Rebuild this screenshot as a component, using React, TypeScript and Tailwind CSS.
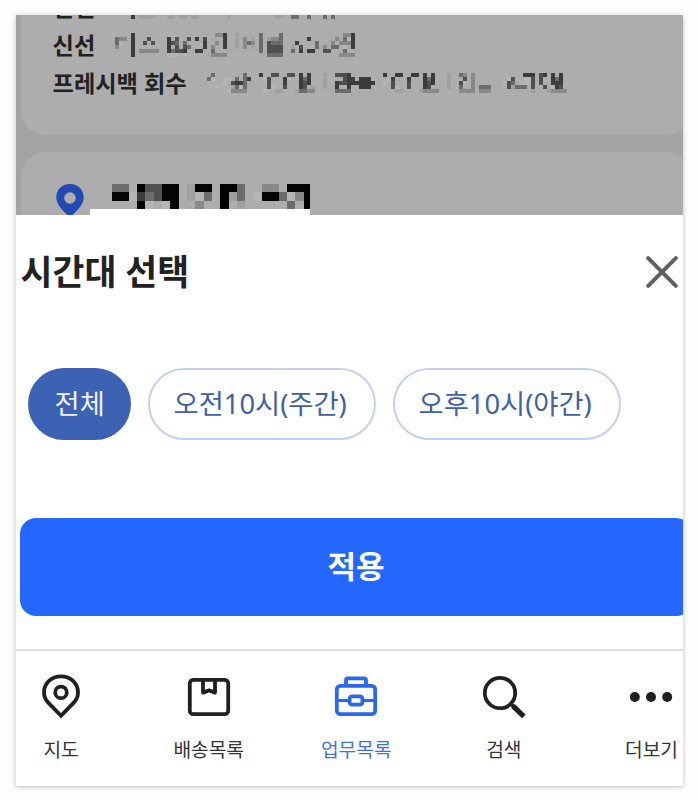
import type { ReactNode } from "react";

const SHADES: Record<string, string> = {
  "+": "#b5b5b5",
  "1": "#a0a0a0",
  "2": "#888888",
  "3": "#6c6c6c",
  "4": "#505050",
  "5": "#3c3c3c",
  "9": "#040404",
};

// Masked values: one character per cell, "." is transparent.
const PREV_MASK = [
  "....5.1111...11.11.11.......1...........11..33..3...3.3.....",
];

const PRICE_MASK = [
  "....5....................225..1.....3....3...............225",
  "322.5...4....5.4..4.5.4....5..1.2.1.3.1223......5......2.3+5",
  "3+..5..4.4...543.3....5..2.5..1.232.3.4333...5....3...2.2225",
  "2...5........5.4.43...5.2..5..1.2.1.3.4444..1.4...3.2.33.+.5",
  "....5.22222..53445..55..3...........3.4444..3.5.55..44...3..",
  "....5........+++.+......2222..........3333..............2222",
];

const BAG_MASK = [
  ".3.......3...5..44..44.5.5...1..4445........5..55..55.5.5...1..32.2............555.45.5.5.",
  "3+..++.3.35...+4...5+..535...1....455.555....+5...5...535...1...4.2........+4..++4.4..535.",
  "....+.4553.....4...5...545...1..5445555555..+.4...4...545...1..4+.2.......+43.+++4.4..555.",
  "..+...13+3.....4+..4...54.1..1..5..5..555.....4+..4...54....1..3..2.333....41333.4..4.+54.",
  ".....+2222....+..11...13322.....3333...........11....12222.....2222.222..........1...12222",
];

const ADDRESS_MASK = [
  "33.94499.199.993..22.999",
  "99+53499.1+3.913.+993+29",
  "...9+.+9..2..9.1.....3.9",
];

function Mosaic({
  rows,
  cell,
  className = "",
}: {
  rows: string[];
  cell: number;
  className?: string;
}) {
  const w = rows[0].length * cell;
  const h = rows.length * cell;
  return (
    <svg
      width={w}
      height={h}
      viewBox={`0 0 ${w} ${h}`}
      shapeRendering="crispEdges"
      className={`shrink-0 ${className}`}
    >
      {rows.flatMap((row, y) =>
        row.split("").map((c, x) =>
          SHADES[c] ? (
            <rect
              key={`${x}-${y}`}
              x={x * cell}
              y={y * cell}
              width={cell}
              height={cell}
              fill={SHADES[c]}
            />
          ) : null,
        ),
      )}
    </svg>
  );
}

function CloseIcon() {
  return (
    <svg width="32" height="32" viewBox="0 0 32 32" fill="none">
      <path
        d="M2.2 2.2l27.6 27.6M29.8 2.2L2.2 29.8"
        stroke="#606060"
        strokeWidth="4"
        strokeLinecap="round"
      />
    </svg>
  );
}

function Chip({
  children,
  active,
  className,
}: {
  children: ReactNode;
  active?: boolean;
  className: string;
}) {
  return (
    <button
      type="button"
      className={[
        "h-[72px] shrink-0 rounded-full border-2 text-[27.3px] leading-none whitespace-nowrap",
        active
          ? "border-[#3c62b4] bg-[#3c62b4] text-[#eef3ff]"
          : "border-[#c3d1f0] bg-white text-[#3f60a6]",
        className,
      ].join(" ")}
    >
      {children}
    </button>
  );
}

function MapIcon() {
  return (
    <svg width="48" height="48" viewBox="0 0 48 48" fill="none" stroke="#202020" strokeWidth="3.8">
      <path d="M24 43.8L11 30.4C8.2 27.2 7 24 7 20.4C7 11.2 14.6 4.4 24 4.4s17 6.8 17 16c0 3.6-1.2 6.8-4 10z" />
      <circle cx="24" cy="20.4" r="5.8" />
    </svg>
  );
}

function BoxIcon() {
  return (
    <svg width="48" height="48" viewBox="0 0 48 48" fill="none" stroke="#202020" strokeWidth="3.8" strokeLinejoin="round">
      <rect x="4.8" y="7.8" width="38.4" height="34.4" rx="3.5" />
      <path d="M18 8v12.6l6-2.2 6 2.2V8" />
    </svg>
  );
}

function BriefcaseIcon() {
  return (
    <svg width="48" height="48" viewBox="0 0 48 48" fill="none" stroke="#2a67ea" strokeWidth="3.8" strokeLinejoin="round">
      <rect x="4.8" y="13.8" width="38.4" height="28.4" rx="3.8" />
      <path d="M14 13.5V8.4a2 2 0 0 1 2-2h16a2 2 0 0 1 2 2v5.1" />
      <path d="M5 28.5h12.5M30.5 28.5H43" strokeWidth="3.2" />
      <rect x="17.6" y="24.3" width="12.8" height="8.4" rx="2.4" />
    </svg>
  );
}

function SearchIcon() {
  return (
    <svg width="48" height="48" viewBox="0 0 48 48" fill="none" stroke="#202020">
      <circle cx="20" cy="21" r="15.2" strokeWidth="3.8" />
      <path d="M33 34l10.8 10.3" strokeWidth="5.2" />
      <path d="M31 32l3 3" strokeWidth="3.6" />
    </svg>
  );
}

function MoreIcon() {
  return (
    <svg width="48" height="48" viewBox="0 0 48 48" fill="#202020">
      <circle cx="7.8" cy="25" r="5" />
      <circle cx="24" cy="25" r="5" />
      <circle cx="40.2" cy="25" r="5" />
    </svg>
  );
}

const TABS = [
  { label: "지도", icon: <MapIcon /> },
  { label: "배송목록", icon: <BoxIcon /> },
  { label: "업무목록", icon: <BriefcaseIcon />, active: true },
  { label: "검색", icon: <SearchIcon /> },
  { label: "더보기", icon: <MoreIcon /> },
];

export default function App() {
  return (
    <div className="h-[801px] w-[698px] overflow-hidden bg-[#fdfdfd] pt-[15px] pl-[15.6px] font-['Noto_Sans','Noto_Sans_CJK_KR',sans-serif]">
      <div className="flex h-[771px] w-[667px] flex-col overflow-hidden bg-white shadow-[0_1px_5px_rgba(0,0,0,0.25)]">
        {/* dimmed page behind the sheet */}
        <div className="h-[200px] shrink-0 overflow-hidden bg-[#a2a3a4]">
          <div className="ml-[5px] h-[120px] w-[671px] rounded-b-[25px] bg-[#adadad] pl-[32px] text-[23.2px] font-bold text-[#222]">
            <div className="flex h-[11px] items-end overflow-hidden">
              <span className="h-[38px] w-[62.7px] shrink-0 leading-[38px]">신선</span>
              <Mosaic rows={PREV_MASK} cell={4} className="mb-[7px]" />
            </div>
            <div className="flex h-[38px] items-center">
              <span className="w-[62.7px] shrink-0">신선</span>
              <Mosaic rows={PRICE_MASK} cell={4} />
            </div>
            <div className="flex h-[38px] items-center">
              <span className="w-[154.4px] shrink-0">프레시백 회수</span>
              <Mosaic rows={BAG_MASK} cell={4} />
            </div>
          </div>
          <div className="mt-[17px] ml-[5px] flex h-[80px] w-[671px] items-start rounded-t-[25px] bg-[#adadad] pt-[32px] pl-[35px]">
            <svg width="28" height="32" viewBox="0 0 28 32" className="shrink-0">
              <path
                fillRule="evenodd"
                fill="#2349b2"
                d="M14 0C6 0 .3 5.8.3 13.2C.3 20 6 26 10.8 30.2Q14 33 17.2 30.2C22 26 27.7 20 27.7 13.2C27.7 5.8 22 0 14 0zM14 8.2a5.8 5.8 0 1 1 0 11.6a5.8 5.8 0 0 1 0-11.6z"
              />
            </svg>
            <div className="ml-[6.4px] w-[220px] overflow-hidden">
              <Mosaic rows={ADDRESS_MASK} cell={8.33} className="ml-[22.3px]" />
              <div className="h-[7px] bg-white" />
            </div>
          </div>
        </div>

        {/* bottom sheet */}
        <div className="flex h-[434px] shrink-0 flex-col">
          <div className="mt-[34px] flex h-[46px] items-center justify-between px-[5px]">
            <h1 className="text-[34.7px] leading-none font-bold text-[#222]">시간대 선택</h1>
            <CloseIcon />
          </div>
          <div className="mt-[73px] ml-[12.6px] flex gap-[17px]">
            <Chip active className="w-[103px] px-0">전체</Chip>
            <Chip className="w-[228px] pr-[4px]">오전10시(주간)</Chip>
            <Chip className="w-[228px] pr-[4px]">오후10시(야간)</Chip>
          </div>
          <button
            type="button"
            className="mt-[78px] ml-[4.5px] h-[98px] w-[672px] shrink-0 rounded-[16px] bg-[#2467ff] pb-[2px] text-[31px] leading-none font-bold text-white"
          >
            적용
          </button>
        </div>

        <nav className="-ml-[28.3px] flex w-[738px] grow border-t-2 border-[#dedede]">
          {TABS.map((t) => (
            <div key={t.label} className="flex w-[147.6px] shrink-0 flex-col items-center pt-[21px]">
              {t.icon}
              <span
                className={[
                  "mt-[16px] text-[19.2px] leading-[28px]",
                  t.active ? "text-[#3f72dc]" : "text-[#333]",
                ].join(" ")}
              >
                {t.label}
              </span>
            </div>
          ))}
        </nav>
      </div>
    </div>
  );
}
